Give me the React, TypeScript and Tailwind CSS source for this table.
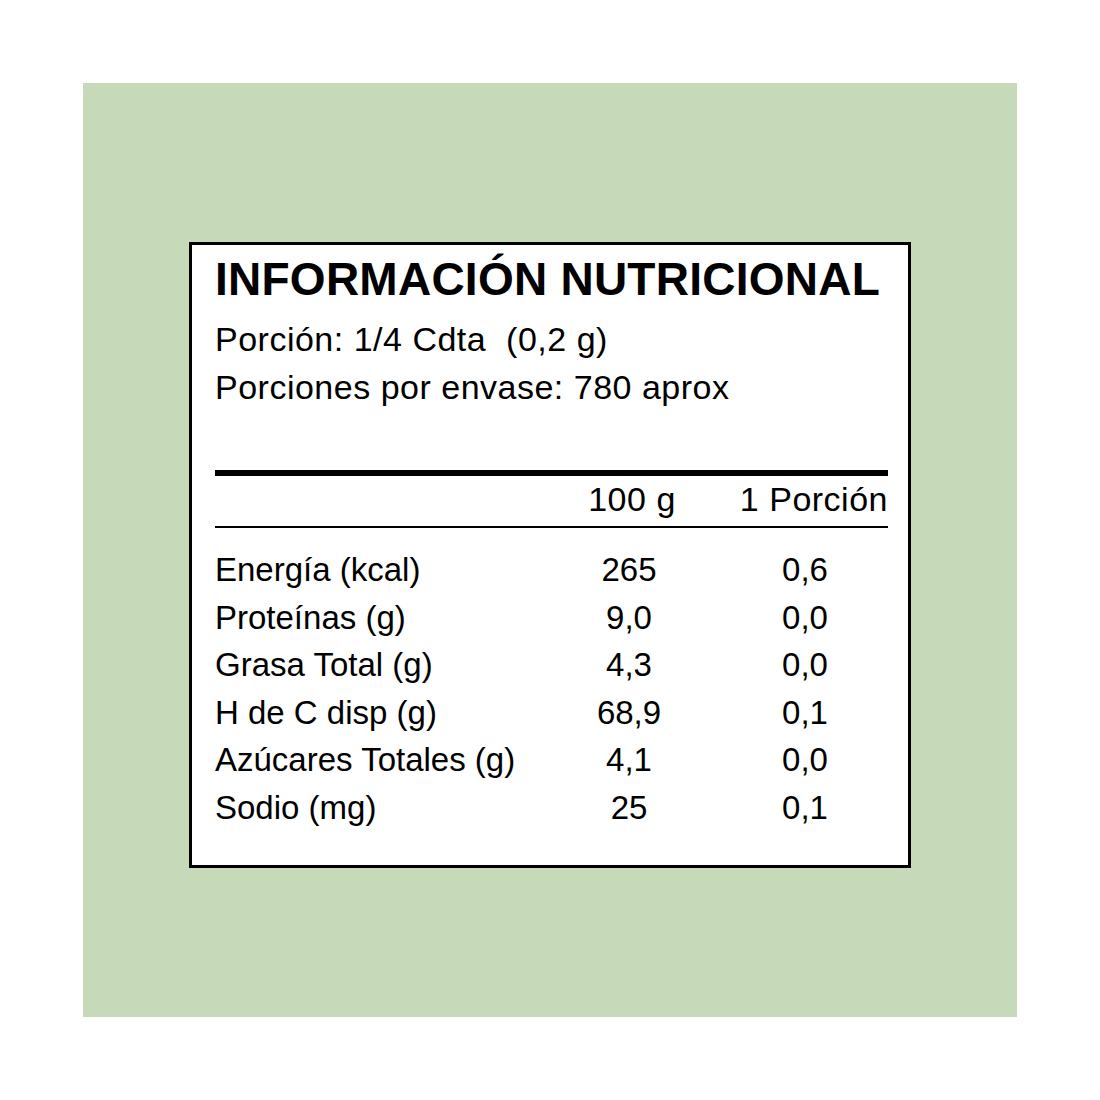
const rows = [
  { label: "Energía (kcal)", per100: "265", portion: "0,6" },
  { label: "Proteínas (g)", per100: "9,0", portion: "0,0" },
  { label: "Grasa Total (g)", per100: "4,3", portion: "0,0" },
  { label: "H de C disp (g)", per100: "68,9", portion: "0,1" },
  { label: "Azúcares Totales (g)", per100: "4,1", portion: "0,0" },
  { label: "Sodio (mg)", per100: "25", portion: "0,1" },
];

export default function App() {
  return (
    <div className="w-[1100px] h-[1100px] bg-white p-[83px] font-['Liberation_Sans',Arial,sans-serif] text-black">
      <div className="w-[934px] h-[934px] bg-[#c6d9b9] flex justify-center pt-[159px]">
        <div className="w-[722px] h-[626px] border-[3px] border-black bg-white pl-[23px] pr-[20px] pt-[11px]">
          {/* title + serving info */}
          <h1 className="text-[46px] leading-[46px] font-bold tracking-[0.25px]">INFORMACIÓN NUTRICIONAL</h1>
          <div className="mt-[13px] text-[34px] leading-[48px] tracking-[0.5px]">
            <p>Porción: 1/4 Cdta&nbsp; (0,2 g)</p>
            <p>Porciones por envase: 780 aprox</p>
          </div>

          <div className="mt-[59px] h-[6px] bg-black" />

          {/* column header */}
          <div className="mt-[6px] grid grid-cols-[321px_186px_166px] text-[34px] leading-[34px] tracking-[0.5px]">
            <span />
            <span className="text-center pl-[6px]">100 g</span>
            <span className="text-right">1 Porción</span>
          </div>

          <div className="mt-[10px] h-[2px] bg-black" />

          {/* nutrient rows */}
          <div className="mt-[18px] text-[33px] leading-[47.5px]">
            {rows.map((r) => (
              <div key={r.label} className="grid grid-cols-[321px_186px_166px]">
                <span>{r.label}</span>
                <span className="text-center">{r.per100}</span>
                <span className="text-center">{r.portion}</span>
              </div>
            ))}
          </div>
        </div>
      </div>
    </div>
  );
}
